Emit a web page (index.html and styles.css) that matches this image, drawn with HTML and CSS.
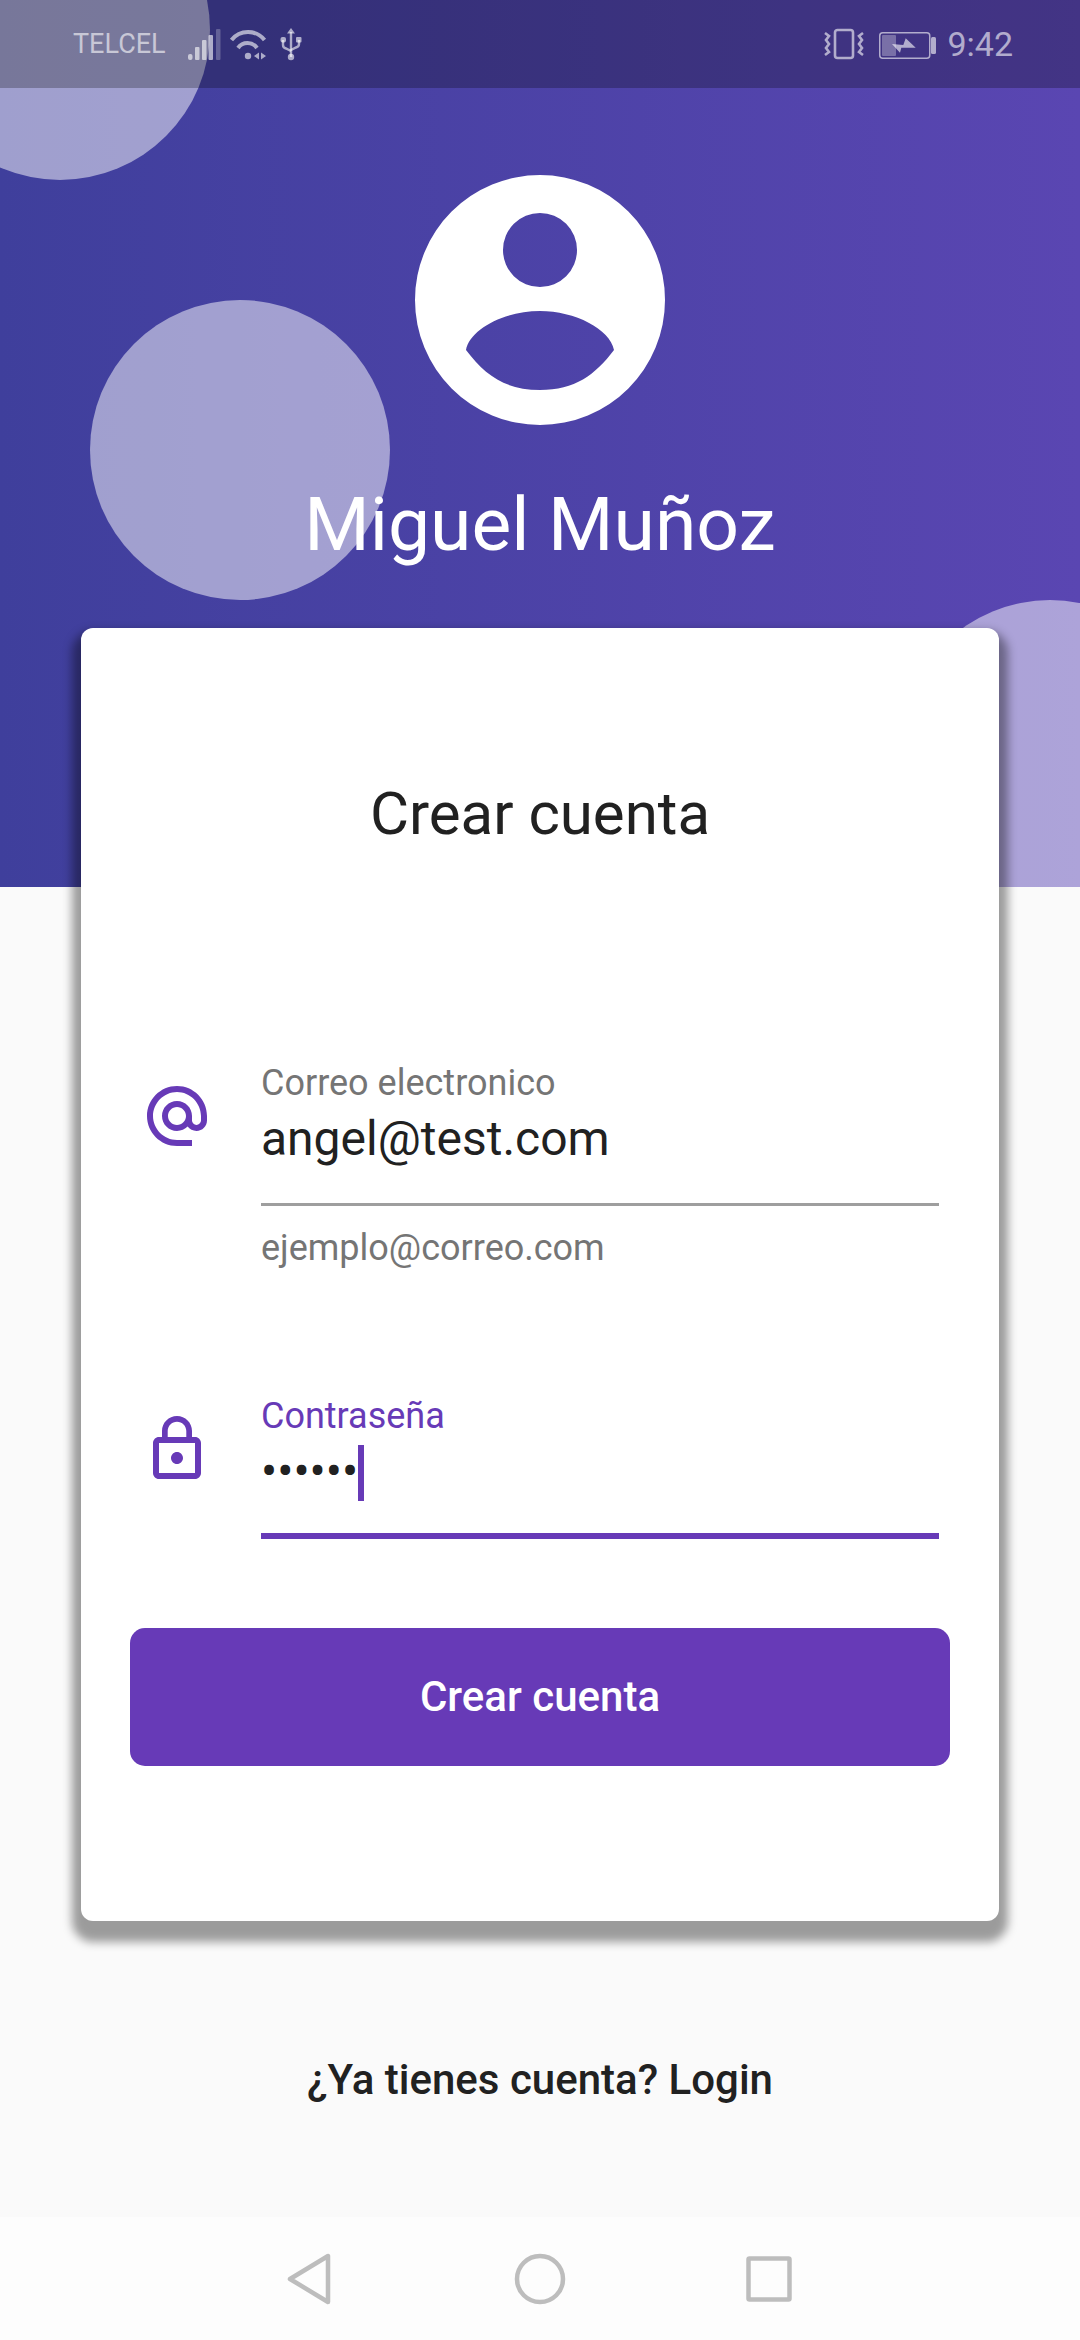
FILE: index.html
```html
<!DOCTYPE html>
<html lang="en">
<head>
    <meta charset="UTF-8">
    <meta name="viewport" content="width=device-width, initial-scale=1.0">
    <title>Crear cuenta</title>
    <link rel="stylesheet" href="styles.css">
</head>
<body>
    <div class="screen">
        <!-- Purple header with circles -->
        <header class="hero">
            <div class="circle circle-top"></div>
            <div class="circle circle-mid"></div>
            <div class="circle circle-right"></div>

            <div class="status-bar">
                <span class="carrier">TELCEL</span>
                <svg class="ic-signal" width="33" height="31" viewBox="0 0 33 31" fill="currentColor">
                    <rect x="0" y="25" width="4.5" height="6" rx="2"/>
                    <rect x="7" y="18" width="4.5" height="13" rx="1"/>
                    <rect x="14" y="11" width="4.5" height="20" rx="1"/>
                    <rect x="20.5" y="6" width="4.5" height="25" rx="1"/>
                    <rect x="28" y="0" width="4.5" height="31" rx="1" opacity="0.4"/>
                </svg>
                <svg class="ic-wifi" width="38" height="31" viewBox="0 0 38 31" fill="none" stroke="currentColor" stroke-width="4">
                    <path d="M2.5 11 A21 21 0 0 1 35.5 11"/>
                    <path d="M9 19 A11.5 11.5 0 0 1 28 19"/>
                    <circle cx="19" cy="27" r="3.2" fill="currentColor" stroke="none"/>
                    <path d="M30 23.5v7l-5-3.5zM32 23.5v7l5-3.5z" fill="currentColor" stroke="none"/>
                </svg>
                <svg class="ic-usb" width="22" height="33" viewBox="0 0 22 33" fill="none" stroke="currentColor" stroke-width="2.4">
                    <path d="M11 4v25"/>
                    <path d="M3 12v5c0 2 1 3 3 3.500l5 2.500M19 12v4c0 2-1 3-3 3.500l-5 2.500"/>
                    <path d="M11 0l4 5.500h-8z" fill="currentColor" stroke="none"/>
                    <circle cx="11" cy="29" r="3.200" fill="currentColor" stroke="none"/>
                    <rect x="0.500" y="9" width="5.500" height="5.500" rx="2" fill="currentColor" stroke="none"/>
                    <rect x="16" y="9" width="5.500" height="5.500" rx="1" fill="currentColor" stroke="none"/>
                </svg>
                <div class="status-right">
                    <svg class="ic-vibrate" width="40" height="32" viewBox="0 0 40 32" fill="none" stroke="currentColor" stroke-width="2.600">
                        <rect x="11" y="2" width="18" height="28" rx="2.500"/>
                        <path d="M1 5l4 3-3 4 3 4-3 4 3 4-4 3"/>
                        <path d="M39 5l-4 3 3 4-3 4 3 4-3 4 4 3"/>
                    </svg>
                    <svg class="ic-battery" width="57" height="29" viewBox="0 0 57 29" fill="currentColor">
                        <rect x="0.750" y="2.750" width="50" height="25.500" rx="3" fill="none" stroke="currentColor" stroke-width="1.500"/>
                        <rect x="3" y="5" width="14" height="21" rx="1" opacity="0.5"/>
                        <path d="M13 14l11.300 1 2.400-6.700 10 9.400H22.300L21 22.700z"/>
                        <rect x="52" y="7" width="5" height="17" rx="1.500"/>
                    </svg>
                    <span class="clock">9:42</span>
                </div>
            </div>

            <div class="profile">
                <svg class="avatar" width="250" height="250" viewBox="0 0 250 250" fill="#fff" fill-rule="evenodd">
                    <path d="M125 0a125 125 0 1 0 0 250a125 125 0 1 0 0-250zM125 38a37 37 0 1 1 0 74a37 37 0 1 1 0-74zM125 136C160 136 195 154 199 175C180 200 160 215 125 215C90 215 70 200 51 175C55 154 90 136 125 136z"/>
                </svg>
                <h1 class="profile-name">Miguel Muñoz</h1>
            </div>
        </header>

        <!-- Register form -->
        <main class="card">
            <h2 class="card-title">Crear cuenta</h2>

            <div class="field field-email">
                <svg class="field-icon" width="72" height="72" viewBox="0 0 24 24" fill="#673ab7">
                    <path d="M12 2C6.480 2 2 6.480 2 12s4.480 10 10 10h5v-2h-5c-4.340 0-8-3.660-8-8s3.660-8 8-8 8 3.660 8 8v1.430c0 .790-.710 1.570-1.500 1.570s-1.500-.780-1.500-1.570V12c0-2.760-2.240-5-5-5s-5 2.240-5 5 2.240 5 5 5c1.380 0 2.640-.560 3.540-1.470.650.890 1.770 1.470 2.960 1.470 1.970 0 3.500-1.600 3.500-3.570V12c0-5.520-4.480-10-10-10zm0 13c-1.660 0-3-1.340-3-3s1.340-3 3-3 3 1.340 3 3-1.340 3-3 3z"/>
                </svg>
                <div class="field-body">
                    <div class="field-input">
                        <div class="field-label">Correo electronico</div>
                        <div class="field-value">angel@test.com</div>
                    </div>
                    <div class="field-help">ejemplo@correo.com</div>
                </div>
            </div>

            <div class="field field-password">
                <svg class="field-icon" width="72" height="72" viewBox="0 0 24 24" fill="#673ab7">
                    <path d="M12 17c1.100 0 2-.9 2-2s-.9-2-2-2-2 .9-2 2 .9 2 2 2zm6-9h-1V6c0-2.760-2.240-5-5-5S7 3.240 7 6v2H6c-1.100 0-2 .9-2 2v10c0 1.100.9 2 2 2h12c1.100 0 2-.9 2-2V10c0-1.100-.9-2-2-2zM8.900 6c0-1.710 1.390-3.100 3.100-3.100 1.710 0 3.100 1.390 3.100 3.100v2H8.900V6zM18 20H6V10h12v10z"/>
                </svg>
                <div class="field-body">
                    <div class="field-input focused">
                        <div class="field-label">Contraseña</div>
                        <div class="field-value">••••••<span class="caret"></span></div>
                    </div>
                </div>
            </div>

            <div class="submit-btn">Crear cuenta</div>
        </main>

        <p class="login-link">¿Ya tienes cuenta? Login</p>

        <!-- Android nav bar -->
        <nav class="nav-bar">
            <svg width="44" height="52" viewBox="0 0 44 52" fill="none" stroke="#bdbdbd" stroke-width="4.500" stroke-linejoin="round">
                <path d="M41 3V49L3 26z"/>
            </svg>
            <svg class="nav-home" width="52" height="52" viewBox="0 0 52 52" fill="none" stroke="#bdbdbd" stroke-width="4.500">
                <circle cx="26" cy="26" r="23"/>
            </svg>
            <svg width="46" height="46" viewBox="0 0 46 46" fill="none" stroke="#bdbdbd" stroke-width="4.500" stroke-linejoin="round">
                <rect x="2.500" y="2.500" width="41" height="41" rx="1"/>
            </svg>
        </nav>
    </div>
</body>
</html>
```

FILE: styles.css
```css
/* General Styles */
body {
    margin: 0;
    font-family: Roboto, "Noto Sans", sans-serif;
    background-color: #fafafa;
    color: #212121;
}
.screen {
    display: flex;
    flex-direction: column;
    width: 1080px;
    height: 2340px;
    overflow: hidden;
}

/* Header */
.hero {
    position: relative;
    flex: none;
    height: 887px;
    overflow: hidden;
    background: linear-gradient(90deg, rgb(63, 63, 156), rgb(90, 70, 178));
}
.circle {
    position: absolute;
    width: 300px;
    height: 300px;
    border-radius: 50%;
    background-color: rgba(255, 255, 255, 0.5);
}
.circle-top {
    left: -90px;
    top: -120px;
}
.circle-mid {
    left: 90px;
    top: 300px;
}
.circle-right {
    left: 900px;
    top: 600px;
}

/* Status bar */
.status-bar {
    position: relative;
    display: flex;
    align-items: center;
    height: 88px;
    padding: 0 67px 0 73px;
    background-color: rgba(0, 0, 0, 0.25);
    color: rgba(255, 255, 255, 0.6);
}
.carrier {
    font-size: 27px;
    margin-right: 22px;
}
.ic-signal {
    margin-right: 8px;
}
.ic-wifi {
    margin-right: 13px;
}
.status-right {
    display: flex;
    align-items: center;
    margin-left: auto;
}
.ic-vibrate {
    margin-right: 15px;
}
.ic-battery {
    margin-right: 11px;
}
.clock {
    font-size: 34px;
}

/* Profile */
.profile {
    position: relative;
    display: flex;
    flex-direction: column;
    align-items: center;
    padding-top: 87px;
}
.avatar {
    display: block;
}
.profile-name {
    margin: 57px 0 0;
    font-size: 75px;
    font-weight: 400;
    line-height: 84px;
    color: #fff;
}

/* Card */
.card {
    position: relative;
    flex: none;
    height: 1293px;
    box-sizing: border-box;
    margin: -259px 81px 0;
    padding: 151px 49px 0;
    border-radius: 12px;
    background-color: #fff;
    box-shadow: 0 12px 10px 9px rgba(0, 0, 0, 0.38);
}
.card-title {
    margin: 0 0 213px;
    font-size: 60px;
    font-weight: 400;
    line-height: 70px;
    text-align: center;
}
.field {
    display: flex;
    gap: 48px;
    padding: 0 11px;
}
.field-password {
    margin-top: 126px;
}
.field-icon {
    flex: none;
    margin-top: 18px;
}
.field-body {
    flex: 1;
}
.field-input {
    padding-bottom: 30px;
    border-bottom: 3px solid #9e9e9e;
}
.field-input.focused {
    padding-bottom: 27px;
    border-bottom: 6px solid #673ab7;
}
.field-label {
    font-size: 36px;
    line-height: 42px;
    color: #757575;
}
.focused .field-label {
    color: #673ab7;
}
.field-value {
    display: flex;
    align-items: center;
    height: 69px;
    font-size: 48px;
}
.caret {
    width: 6px;
    height: 56px;
    margin-top: 3px;
    background-color: #673ab7;
}
.field-help {
    margin-top: 21px;
    font-size: 36px;
    line-height: 42px;
    color: #757575;
}
.submit-btn {
    margin-top: 89px;
    height: 138px;
    border-radius: 15px;
    background-color: #673ab7;
    color: #fff;
    font-size: 42px;
    font-weight: 500;
    line-height: 138px;
    text-align: center;
}

/* Footer */
.login-link {
    margin: 134px 0 0;
    font-size: 42px;
    font-weight: 500;
    line-height: 50px;
    text-align: center;
}
.nav-bar {
    display: flex;
    align-items: center;
    justify-content: space-between;
    box-sizing: border-box;
    height: 123px;
    margin-top: auto;
    padding: 0 288px 0 287px;
    background-color: #fdfdfd;
}
.nav-home {
    margin-left: 3px;
}
```
